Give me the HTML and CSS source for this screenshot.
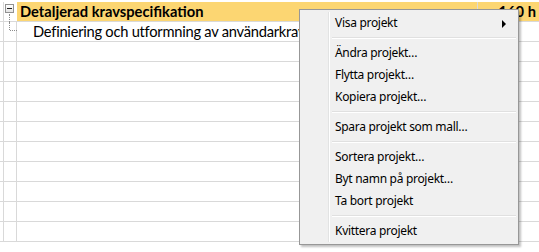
FILE: index.html
```html
<!DOCTYPE html>
<html lang="sv">
<head>
<meta charset="UTF-8">
<title>Projekt</title>
<link rel="stylesheet" href="styles.css">
</head>
<body>

<div class="sheet">
  <div class="row row-head">
    <div class="col-a"></div>
    <div class="col-tree"><span class="expander"></span><span class="tree-down"></span></div>
    <div class="col-name">Detaljerad kravspecifikation</div>
    <div class="col-hours">160 h</div>
  </div>
  <div class="row">
    <div class="col-a"></div>
    <div class="col-tree"><span class="tree-up"></span><span class="tree-across"></span></div>
    <div class="col-name child">Definiering och utformning av användarkrav och gränssnitt</div>
    <div class="col-hours"></div>
  </div>
  <div class="row"><div class="col-a"></div><div class="col-tree"></div><div class="col-name"></div><div class="col-hours"></div></div>
  <div class="row"><div class="col-a"></div><div class="col-tree"></div><div class="col-name"></div><div class="col-hours"></div></div>
  <div class="row"><div class="col-a"></div><div class="col-tree"></div><div class="col-name"></div><div class="col-hours"></div></div>
  <div class="row"><div class="col-a"></div><div class="col-tree"></div><div class="col-name"></div><div class="col-hours"></div></div>
  <div class="row"><div class="col-a"></div><div class="col-tree"></div><div class="col-name"></div><div class="col-hours"></div></div>
  <div class="row"><div class="col-a"></div><div class="col-tree"></div><div class="col-name"></div><div class="col-hours"></div></div>
  <div class="row"><div class="col-a"></div><div class="col-tree"></div><div class="col-name"></div><div class="col-hours"></div></div>
  <div class="row"><div class="col-a"></div><div class="col-tree"></div><div class="col-name"></div><div class="col-hours"></div></div>
  <div class="row"><div class="col-a"></div><div class="col-tree"></div><div class="col-name"></div><div class="col-hours"></div></div>
  <div class="row"><div class="col-a"></div><div class="col-tree"></div><div class="col-name"></div><div class="col-hours"></div></div>
</div>

<!-- context menu -->
<ul class="menu">
  <li class="item has-sub">Visa projekt</li>
  <li class="sep"></li>
  <li class="item">Ändra projekt…</li>
  <li class="item">Flytta projekt…</li>
  <li class="item">Kopiera projekt…</li>
  <li class="sep"></li>
  <li class="item">Spara projekt som mall…</li>
  <li class="sep"></li>
  <li class="item">Sortera projekt…</li>
  <li class="item">Byt namn på projekt…</li>
  <li class="item">Ta bort projekt</li>
  <li class="sep"></li>
  <li class="item">Kvittera projekt</li>
</ul>

</body>
</html>
```

FILE: styles.css
```css
:root{
  --grid:#d9d9d9;
  --head:#fcd672;
  --menu-bg:#f0f0f0;
  --menu-border:#979797;
}
body{
  margin:0;
  font-family:Lato, 'Noto Sans', sans-serif;
  font-size:14.7px;
  color:#000;
  background:#fff;
  overflow:hidden;
  height:252px;
}

.sheet{padding-top:2px;}
.row{
  display:flex;
  height:19px;
  border-bottom:1px solid var(--grid);
}
.col-a{width:3px;border-right:1px solid var(--grid);}
.col-tree{
  width:12px;
  border-right:1px solid var(--grid);
  position:relative;
}
.col-name{
  flex:1;
  line-height:19px;
  padding-left:3px;
  white-space:nowrap;
  overflow:hidden;
  border-right:1px solid var(--grid);
}
.col-hours{
  width:58px;
  line-height:19px;
  text-align:right;
  padding-right:3px;
  font-weight:bold;
}
.row-head .col-name,
.row-head .col-hours{background:var(--head);}
.row-head .col-name{font-weight:bold;}
.row-head .col-tree{border-right-color:transparent;}
.child{padding-left:16px;letter-spacing:-0.25px;}

.expander{
  position:absolute;
  left:1px;top:2px;
  width:7px;height:7px;
  border:1px solid #919191;
  background:linear-gradient(#fff,#e4e4e4);
}
.expander::after{
  content:"";
  position:absolute;
  left:1px;top:3px;
  width:5px;height:1px;
  background:#222;
}
.tree-down{
  position:absolute;
  left:5px;top:12px;
  height:8px;
  border-left:1px dotted #8c8c8c;
}
.tree-up{
  position:absolute;
  left:5px;top:0;
  height:8px;
  border-left:1px dotted #8c8c8c;
}
.tree-across{
  position:absolute;
  left:6px;top:8px;
  width:7px;
  border-top:1px dotted #8c8c8c;
}

/* menu */
.menu{
  position:absolute;
  left:299px;top:9px;
  width:214px;
  margin:0;
  padding:2px;
  list-style:none;
  font-family:'Noto Sans', sans-serif;
  font-size:12px;
  background:var(--menu-bg);
  border:1px solid var(--menu-border);
  box-shadow:2px 2px 2px rgba(0,0,0,0.25);
}
.menu::before{
  content:"";
  position:absolute;
  left:28px;top:2px;bottom:2px;
  width:1px;
  background:#e2e3e3;
  border-right:1px solid #fff;
}
.item{
  position:relative;
  height:22px;
  line-height:22px;
  padding-left:33px;
  letter-spacing:-0.3px;
}
.has-sub::after{
  content:"";
  position:absolute;
  right:10px;top:8px;
  border-left:4px solid #000;
  border-top:4px solid transparent;
  border-bottom:4px solid transparent;
}
.sep{
  height:1px;
  margin:3px 0 3px 30px;
  background:#e0e0e0;
  border-bottom:1px solid #fff;
}
```
